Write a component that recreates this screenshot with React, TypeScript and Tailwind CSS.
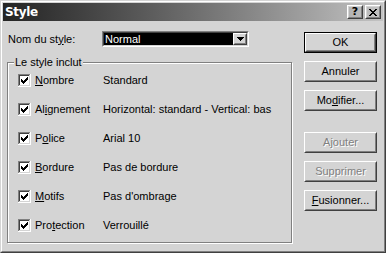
import React from 'react';

const CHECK = ['......#', '.....##', '#...###', '##.###.', '#####..', '.###...', '..#....'];
const CROSS = ['##....##', '.##..##.', '..####..', '...##...', '..####..', '.##..##.', '##....##'];

function Pixels({ rows, x, y }: { rows: string[]; x: number; y: number }) {
  return (
    <>
      {rows.flatMap((row, r) =>
        row.split('').map((c, i) =>
          c === '#' ? <rect key={`${r}-${i}`} x={x + i} y={y + r} width={1} height={1} fill="#000" /> : null
        )
      )}
    </>
  );
}

function CheckBox() {
  return (
    <svg width="13" height="13" viewBox="0 0 13 13" shapeRendering="crispEdges" className="shrink-0">
      <rect x="0" y="0" width="13" height="13" fill="#fff" />
      <rect x="0" y="0" width="12" height="1" fill="#808080" />
      <rect x="0" y="0" width="1" height="12" fill="#808080" />
      <rect x="1" y="1" width="10" height="1" fill="#404040" />
      <rect x="1" y="1" width="1" height="10" fill="#404040" />
      <rect x="1" y="11" width="11" height="1" fill="#d4d4d4" />
      <rect x="11" y="1" width="1" height="11" fill="#d4d4d4" />
      <Pixels rows={CHECK} x={3} y={3} />
    </svg>
  );
}

function Raised({ className, children }: { className?: string; children: React.ReactNode }) {
  return (
    <div className={`border border-t-white border-l-white border-r-[#404040] border-b-[#404040] ${className ?? ''}`}>
      <div className="w-full h-full border border-t-[#d4d4d4] border-l-[#d4d4d4] border-r-[#808080] border-b-[#808080] flex items-center justify-center">
        {children}
      </div>
    </div>
  );
}

function Button({ label, disabled, isDefault }: { label: React.ReactNode; disabled?: boolean; isDefault?: boolean }) {
  const text = disabled ? 'text-[#808080] [text-shadow:1px_1px_0_#fff]' : 'text-black';
  if (isDefault) {
    return (
      <div className="w-[73px] h-[21px] border border-black">
        <Raised className="w-full h-full">
          <span className={text}>{label}</span>
        </Raised>
      </div>
    );
  }
  return (
    <Raised className="w-[73px] h-[21px]">
      <span className={text}>{label}</span>
    </Raised>
  );
}

const U = ({ children }: { children: React.ReactNode }) => (
  <span className="underline underline-offset-[1px]">{children}</span>
);

const rows: { label: React.ReactNode; value: string }[] = [
  { label: <><U>N</U>ombre</>, value: 'Standard' },
  { label: <>Al<U>i</U>gnement</>, value: 'Horizontal: standard - Vertical: bas' },
  { label: <>P<U>o</U>lice</>, value: 'Arial 10' },
  { label: <><U>B</U>ordure</>, value: 'Pas de bordure' },
  { label: <><U>M</U>otifs</>, value: "Pas d'ombrage" },
  { label: <>Pro<U>t</U>ection</>, value: 'Verrouillé' },
];

export default function App() {
  return (
    <div className="w-[386px] h-[253px] bg-[#d4d4d4] border border-t-[#d4d4d4] border-l-[#d4d4d4] border-r-[#404040] border-b-[#404040] font-['Liberation_Sans',Arial,sans-serif] text-[11px] leading-[13px] text-black">
      <div className="h-full border border-t-white border-l-white border-r-[#808080] border-b-[#808080] p-px flex flex-col">
        {/* title bar */}
        <div className="h-[18px] bg-linear-to-r from-[#242424] to-[#c3c3c3] flex items-center justify-between pl-[2px] pr-[2px]">
          <span className="text-white font-bold text-[12px] leading-[14px] font-['DejaVu_Sans',sans-serif] tracking-[-0.3px]">Style</span>
          <div className="flex gap-[2px]">
            <Raised className="w-[16px] h-[14px]">
              <span className="font-bold text-[11px] leading-[10px] font-['DejaVu_Sans',sans-serif]">?</span>
            </Raised>
            <Raised className="w-[16px] h-[14px]">
              <svg width="8" height="7" viewBox="0 0 8 7" shapeRendering="crispEdges">
                <Pixels rows={CROSS} x={0} y={0} />
              </svg>
            </Raised>
          </div>
        </div>

        <div className="flex pl-[4px]">
          {/* left column */}
          <div className="w-[285px] flex flex-col">
            <div className="mt-[10px] flex items-center h-[16px]">
              <span className="w-[95px] pl-px">Nom du st<U>y</U>le:</span>
              <div className="w-[147px] h-[16px] border border-t-[#808080] border-l-[#808080] border-r-white border-b-white">
                <div className="w-full h-full border border-t-[#404040] border-l-[#404040] border-r-[#d4d4d4] border-b-[#d4d4d4] bg-black flex items-center">
                  <span className="flex-1 text-white pl-px">Normal</span>
                  <Raised className="w-[14px] h-full bg-[#d4d4d4]">
                    <svg width="7" height="4" viewBox="0 0 7 4" shapeRendering="crispEdges">
                      <path d="M0 0h7v1H0zM1 1h5v1H1zM2 2h3v1H2zM3 3h1v1H3z" fill="#000" />
                    </svg>
                  </Raised>
                </div>
              </div>
            </div>

            {/* group box */}
            <div className="relative mt-[15px] h-[181px] border border-[#808080] shadow-[inset_1px_1px_0_#fff,1px_1px_0_#fff]">
              <span className="absolute -top-[7px] left-[6px] bg-[#d4d4d4] px-px">Le style inclut</span>
              <div className="flex flex-col gap-[16px] pt-[11px] pl-[10px]">
                {rows.map((r, i) => (
                  <div key={i} className="flex items-center h-[13px]">
                    <CheckBox />
                    <span className="w-[68px] ml-[4px]">{r.label}</span>
                    <span>{r.value}</span>
                  </div>
                ))}
              </div>
            </div>
          </div>

          {/* buttons */}
          <div className="ml-[12px] mt-[11px] flex flex-col gap-[8px]">
            <Button label="OK" isDefault />
            <Button label="Annuler" />
            <Button label={<>Mo<U>d</U>ifier...</>} />
            <div className="mt-[13px]">
              <Button label="Ajouter" disabled />
            </div>
            <Button label="Supprimer" disabled />
            <Button label={<><U>F</U>usionner...</>} />
          </div>
        </div>
      </div>
    </div>
  );
}
